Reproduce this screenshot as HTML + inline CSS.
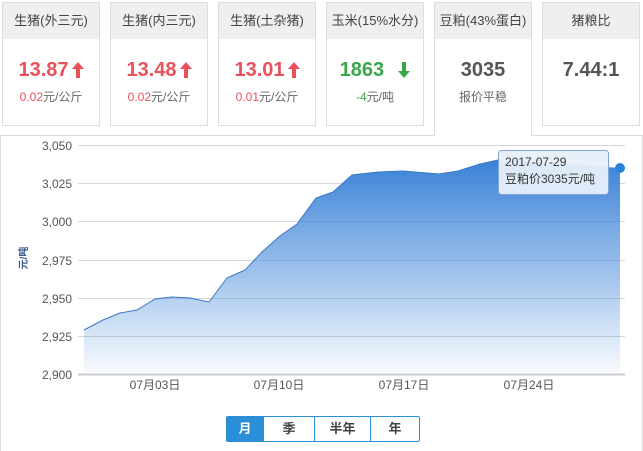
<!DOCTYPE html>
<html><head><meta charset="utf-8"><style>
*{margin:0;padding:0;box-sizing:border-box}
body{width:643px;height:451px;background:#fff;font-family:"Liberation Sans","Noto Sans CJK SC",sans-serif;position:relative;overflow:hidden}
.card{position:absolute;top:2px;width:98px;height:124px;border:1px solid #ddd;background:#fff}
.card .h{height:36px;background:#efefef;text-align:center;line-height:36px;font-size:13px;color:#444}
.card .v{text-align:center;font-size:20px;font-weight:bold;margin-top:19px;height:24px;line-height:24px}
.card .v svg{vertical-align:-2px;margin-left:3px}
.card .s{text-align:center;font-size:12px;color:#666;margin-top:6px}
.red{color:#e8505b}.grn{color:#3aa64a}.gry{color:#555}
.chart{position:absolute;left:0;top:135px;width:643px;height:316px;border:1px solid #ddd;border-bottom:none}
.tabs{position:absolute;left:226px;top:416px;display:flex;height:26px;border:1px solid #2b8fd8;border-radius:2px}
.tabs div{font-size:13px;font-weight:bold;color:#444;line-height:24px;text-align:center;border-left:1px solid #2b8fd8}
</style></head><body>
<div class="chart"></div>
<div class="card" style="left:2px"><div class="h">生猪(外三元)</div><div class="v red">13.87<svg width="12" height="16"><path d="M6,0 L12,7 L8,7 L8,16 L4,16 L4,7 L0,7 Z" fill="#e8505b"/></svg></div><div class="s"><span class="red">0.02</span>元/公斤</div></div>
<div class="card" style="left:110px"><div class="h">生猪(内三元)</div><div class="v red">13.48<svg width="12" height="16"><path d="M6,0 L12,7 L8,7 L8,16 L4,16 L4,7 L0,7 Z" fill="#e8505b"/></svg></div><div class="s"><span class="red">0.02</span>元/公斤</div></div>
<div class="card" style="left:218px"><div class="h">生猪(土杂猪)</div><div class="v red">13.01<svg width="12" height="16"><path d="M6,0 L12,7 L8,7 L8,16 L4,16 L4,7 L0,7 Z" fill="#e8505b"/></svg></div><div class="s"><span class="red">0.01</span>元/公斤</div></div>
<div class="card" style="left:326px"><div class="h">玉米(15%水分)</div><div class="v grn">1863 &nbsp;<svg width="12" height="16"><path d="M6,16 L12,9 L8,9 L8,0 L4,0 L4,9 L0,9 Z" fill="#3aa64a"/></svg></div><div class="s"><span class="grn">-4</span>元/吨</div></div>
<div class="card" style="left:434px;height:134px;border-bottom:none"><div class="h">豆粕(43%蛋白)</div><div class="v gry">3035</div><div class="s">报价平稳</div></div>
<div class="card" style="left:542px"><div class="h">猪粮比</div><div class="v gry">7.44:1</div></div>
<svg style="position:absolute;left:0;top:0" width="643" height="451">
<defs><linearGradient id="g" x1="0" y1="0" x2="0" y2="1"><stop offset="0" stop-color="#3a82d8"/><stop offset="1" stop-color="#3a82d8" stop-opacity="0.03"/></linearGradient></defs>
<g stroke="#d8d8d8" stroke-width="1">
<line x1="78" y1="145.5" x2="625" y2="145.5"/><line x1="78" y1="183.5" x2="625" y2="183.5"/><line x1="78" y1="221.5" x2="625" y2="221.5"/><line x1="78" y1="260.5" x2="625" y2="260.5"/><line x1="78" y1="298.5" x2="625" y2="298.5"/><line x1="78" y1="336.5" x2="625" y2="336.5"/></g>
<path d="M84,330 L103,320 L120,313 L137,310 L155,299 L172,297 L190,298 L209,302 L227,278 L245,270 L262,252 L280,236 L297,224 L316,198 L333,192 L352,175 L378,172 L403,171 L439,174 L458,171 L480,164 L498,160 L515,161 L551,164 L570,163 L592,166 L620,168 L620,374 L84,374 Z" fill="url(#g)" stroke="none"/>
<path d="M84,330 L103,320 L120,313 L137,310 L155,299 L172,297 L190,298 L209,302 L227,278 L245,270 L262,252 L280,236 L297,224 L316,198 L333,192 L352,175 L378,172 L403,171 L439,174 L458,171 L480,164 L498,160" fill="none" stroke="#3a78c8" stroke-width="1"/>
<line x1="78" y1="374.5" x2="625" y2="374.5" stroke="#ccc" stroke-width="2"/>
<circle cx="620" cy="168" r="5" fill="#2b82d8"/>
<g font-size="12" fill="#555" text-anchor="end" font-family="Liberation Sans,sans-serif">
<text x="72" y="150">3,050</text><text x="72" y="188">3,025</text><text x="72" y="226">3,000</text><text x="72" y="265">2,975</text><text x="72" y="303">2,950</text><text x="72" y="341">2,925</text><text x="72" y="379">2,900</text></g>
<text transform="translate(27,258) rotate(-90)" font-size="10" fill="#3a5a8a" text-anchor="middle" font-weight="bold">元/吨</text>
<g font-size="12" fill="#555" text-anchor="middle"><text x="155" y="389">07月03日</text><text x="279" y="389">07月10日</text><text x="404" y="389">07月17日</text><text x="529" y="389">07月24日</text></g>
<rect x="498.5" y="150.5" width="110" height="44" rx="3" fill="#e8effa" fill-opacity="0.95" stroke="#7fa8d8"/>
<text x="505" y="166" font-size="12" fill="#333">2017-07-29</text>
<text x="505" y="183" font-size="12" fill="#333">豆粕价3035元/吨</text>
</svg>
<div class="tabs"><div style="width:36px;border:none;background:#2b8fd8;color:#fff">月</div><div style="width:51px">季</div><div style="width:56px">半年</div><div style="width:49px">年</div></div>
</body></html>
